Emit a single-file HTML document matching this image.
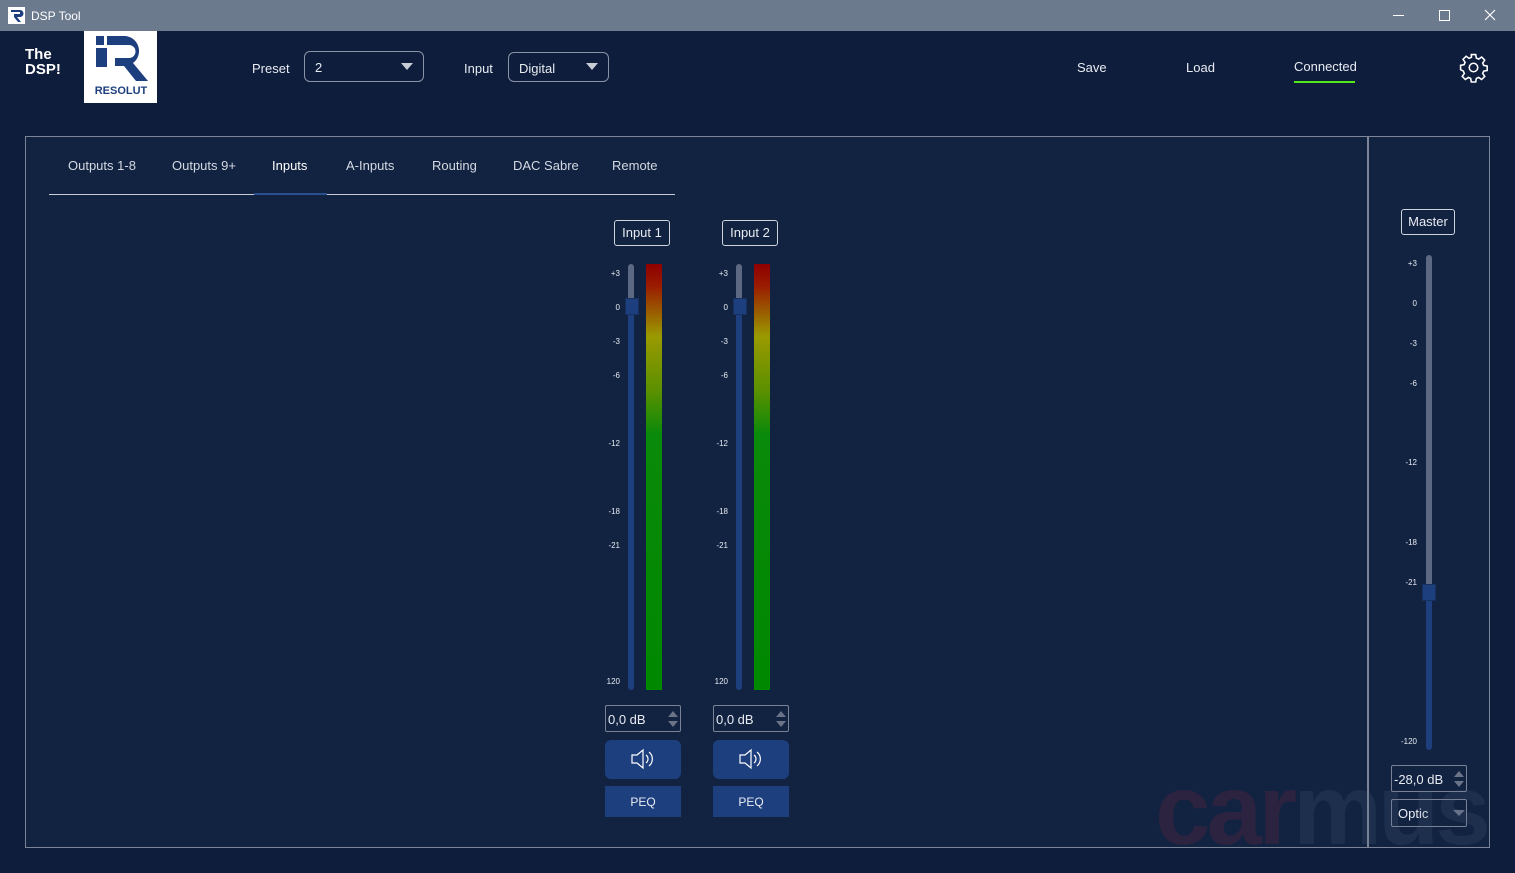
<!DOCTYPE html>
<html><head><meta charset="utf-8"><style>
*{margin:0;padding:0;box-sizing:border-box}
body{width:1515px;height:873px;background:#0e1d3b;font-family:"Liberation Sans",sans-serif;color:#e8ecf2;position:relative;overflow:hidden}
.a{position:absolute}
.tb{left:0;top:0;width:1515px;height:31px;background:#6c7a8e}
.lbl{font-size:13px;color:#e8ecf2}
.sel{border:1px solid #8a93a6;border-radius:6px;height:31px;font-size:13px;padding:8px 10px}
.tri{width:0;height:0;border-left:6px solid transparent;border-right:6px solid transparent;border-top:7px solid #c8ccd4}
.tab{font-size:13px;color:#d4d9e2;top:158px}
.sc{font-size:8px;color:#e8ecf2;text-align:right;width:20px}
.box{border:1px solid #d0d4dc;border-radius:3px;font-size:13px;text-align:center;padding-top:4px;height:26px}
.num{border:1px solid #7a8296;border-radius:2px;height:27px;font-size:13px;padding:6px 2px}
.btn{background:#1d3f7e;border-radius:6px}
.peq{background:#1d3f7e;font-size:12px;text-align:center;padding-top:9px;height:31px}
</style></head><body>
<div class="a tb"></div>
<svg class="a" style="left:8px;top:7px" width="17" height="17" viewBox="0 0 17 17"><rect width="17" height="17" fill="#fff"/><path d="M3 3h9a3 3 0 0 1 0 7h-3l4 5h-3l-4-5V7h6V5H3z" fill="#1d3f7e"/></svg>
<div class="a" style="left:31px;top:9px;font-size:12px;color:#fff">DSP Tool</div>
<div class="a" style="left:1393px;top:15px;width:11px;height:1px;background:#fff"></div>
<div class="a" style="left:1439px;top:10px;width:11px;height:11px;border:1px solid #fff"></div>
<svg class="a" style="left:1484px;top:9px" width="12" height="12"><path d="M1 1l10 10M11 1L1 11" stroke="#fff" stroke-width="1.2"/></svg>

<div class="a" style="left:25px;top:47px;font-size:15px;font-weight:bold;line-height:15px;color:#fff">The<br>DSP!</div>
<div class="a" style="left:84px;top:31px;width:73px;height:72px;background:#fff"></div>
<svg class="a" style="left:84px;top:31px" width="73" height="72" viewBox="0 0 73 72"><path d="M12 5h8v9h-8zM23 5h18a15 15 0 0 1 8 27l15 18h-12l-12-15h-9v-8h14a6 6 0 0 0 0-13H23zM12 17h11v19H12z" fill="#1d3f7e"/><text x="37" y="63" font-size="11" font-weight="bold" text-anchor="middle" fill="#1d3f7e" font-family="Liberation Sans">RESOLUT</text></svg>

<div class="a lbl" style="left:252px;top:61px">Preset</div>
<div class="a sel" style="left:304px;top:51px;width:120px">2</div>
<div class="a tri" style="left:401px;top:63px"></div>
<div class="a lbl" style="left:464px;top:61px">Input</div>
<div class="a sel" style="left:508px;top:52px;width:101px;height:30px">Digital</div>
<div class="a tri" style="left:586px;top:63px"></div>
<div class="a lbl" style="left:1077px;top:60px">Save</div>
<div class="a lbl" style="left:1186px;top:60px">Load</div>
<div class="a lbl" style="left:1294px;top:59px">Connected</div>
<div class="a" style="left:1294px;top:81px;width:61px;height:2px;background:#52e81a"></div>
<svg class="a" style="left:1458px;top:52px" width="31" height="31" viewBox="0 0 24 24" fill="none" stroke="#fff" stroke-width="1.2"><circle cx="12" cy="12" r="3.3"/><path d="M10.3 2h3.4l.5 2.7 1.8.8 2.3-1.6 2.4 2.4-1.6 2.3.8 1.8 2.7.5v3.4l-2.7.5-.8 1.8 1.6 2.3-2.4 2.4-2.3-1.6-1.8.8-.5 2.7h-3.4l-.5-2.7-1.8-.8-2.3 1.6-2.4-2.4 1.6-2.3-.8-1.8L2 13.7v-3.4l2.7-.5.8-1.8-1.6-2.3 2.4-2.4 2.3 1.6 1.8-.8z"/></svg>

<div class="a" style="left:25px;top:136px;width:1465px;height:712px;border:1px solid #7c8597;background:#122241"></div>
<div class="a" style="left:1367px;top:137px;width:2px;height:710px;background:#7c8597"></div>

<div class="a tab" style="left:68px">Outputs 1-8</div>
<div class="a tab" style="left:172px">Outputs 9+</div>
<div class="a tab" style="left:272px;color:#fff">Inputs</div>
<div class="a tab" style="left:346px">A-Inputs</div>
<div class="a tab" style="left:432px">Routing</div>
<div class="a tab" style="left:513px">DAC Sabre</div>
<div class="a tab" style="left:612px">Remote</div>
<div class="a" style="left:49px;top:194px;width:626px;height:1px;background:#c8ccd6"></div>
<div class="a" style="left:254px;top:193px;width:73px;height:2px;background:#2a4f8e"></div>

<div class="a box" style="left:614px;top:220px;width:56px">Input 1</div>
<div class="a" style="left:628px;top:264px;width:6px;height:40px;background:#5d6882;border-radius:3px"></div>
<div class="a" style="left:628px;top:304px;width:6px;height:386px;background:#1d3f7e;border-radius:3px"></div>
<div class="a" style="left:625px;top:298px;width:14px;height:17px;background:#1d3f7e;border:1px solid #16305f"></div>
<div class="a" style="left:646px;top:264px;width:16px;height:426px;background:linear-gradient(#8e0000 0%,#9a1a00 5%,#9a9a00 17%,#5a9000 30%,#0a8a0a 40%,#008800 100%)"></div>
<div class="a box" style="left:722px;top:220px;width:56px">Input 2</div>
<div class="a" style="left:736px;top:264px;width:6px;height:40px;background:#5d6882;border-radius:3px"></div>
<div class="a" style="left:736px;top:304px;width:6px;height:386px;background:#1d3f7e;border-radius:3px"></div>
<div class="a" style="left:733px;top:298px;width:14px;height:17px;background:#1d3f7e;border:1px solid #16305f"></div>
<div class="a" style="left:754px;top:264px;width:16px;height:426px;background:linear-gradient(#8e0000 0%,#9a1a00 5%,#9a9a00 17%,#5a9000 30%,#0a8a0a 40%,#008800 100%)"></div>

<div class="a sc" style="left:600px;top:269px">+3</div><div class="a sc" style="left:600px;top:303px">0</div><div class="a sc" style="left:600px;top:337px">-3</div><div class="a sc" style="left:600px;top:371px">-6</div><div class="a sc" style="left:600px;top:439px">-12</div><div class="a sc" style="left:600px;top:507px">-18</div><div class="a sc" style="left:600px;top:541px">-21</div><div class="a sc" style="left:600px;top:677px">120</div>
<div class="a sc" style="left:708px;top:269px">+3</div><div class="a sc" style="left:708px;top:303px">0</div><div class="a sc" style="left:708px;top:337px">-3</div><div class="a sc" style="left:708px;top:371px">-6</div><div class="a sc" style="left:708px;top:439px">-12</div><div class="a sc" style="left:708px;top:507px">-18</div><div class="a sc" style="left:708px;top:541px">-21</div><div class="a sc" style="left:708px;top:677px">120</div>

<div class="a num" style="left:605px;top:705px;width:76px">0,0 dB</div>
<div class="a num" style="left:713px;top:705px;width:76px">0,0 dB</div>
<svg class="a" style="left:666px;top:709px" width="14" height="20"><path d="M2 8l5-6 5 6zM2 12l5 6 5-6z" fill="#6a7388"/></svg>
<svg class="a" style="left:774px;top:709px" width="14" height="20"><path d="M2 8l5-6 5 6zM2 12l5 6 5-6z" fill="#6a7388"/></svg>
<div class="a btn" style="left:605px;top:740px;width:76px;height:39px"></div>
<div class="a btn" style="left:713px;top:740px;width:76px;height:39px"></div>
<svg class="a" style="left:630px;top:748px" width="26" height="22" viewBox="0 0 26 22" fill="none" stroke="#fff" stroke-width="1.2"><path d="M2 7h5l6-5v18l-6-5H2z"/><path d="M16 7a5 5 0 0 1 0 8M19 4a9 9 0 0 1 0 14"/></svg>
<svg class="a" style="left:738px;top:748px" width="26" height="22" viewBox="0 0 26 22" fill="none" stroke="#fff" stroke-width="1.2"><path d="M2 7h5l6-5v18l-6-5H2z"/><path d="M16 7a5 5 0 0 1 0 8M19 4a9 9 0 0 1 0 14"/></svg>
<div class="a peq" style="left:605px;top:786px;width:76px">PEQ</div>
<div class="a peq" style="left:713px;top:786px;width:76px">PEQ</div>

<div class="a box" style="left:1401px;top:209px;width:54px">Master</div>
<div class="a" style="left:1426px;top:255px;width:6px;height:335px;background:#5d6882;border-radius:3px"></div>
<div class="a" style="left:1426px;top:590px;width:6px;height:160px;background:#1d3f7e;border-radius:3px"></div>
<div class="a" style="left:1422px;top:584px;width:14px;height:17px;background:#1d3f7e;border:1px solid #16305f"></div>
<div class="a sc" style="left:1397px;top:259px">+3</div><div class="a sc" style="left:1397px;top:299px">0</div><div class="a sc" style="left:1397px;top:339px">-3</div><div class="a sc" style="left:1397px;top:379px">-6</div><div class="a sc" style="left:1397px;top:458px">-12</div><div class="a sc" style="left:1397px;top:538px">-18</div><div class="a sc" style="left:1397px;top:578px">-21</div><div class="a sc" style="left:1397px;top:737px">-120</div>
<div class="a num" style="left:1391px;top:765px;width:76px">-28,0 dB</div>
<svg class="a" style="left:1452px;top:769px" width="14" height="20"><path d="M2 8l5-6 5 6zM2 12l5 6 5-6z" fill="#6a7388"/></svg>
<div class="a num" style="left:1391px;top:799px;width:76px;height:28px;padding:6px">Optic</div>
<svg class="a" style="left:1452px;top:808px" width="14" height="10"><path d="M1 2h12l-6 6z" fill="#6a7388"/></svg>

<div class="a" style="left:1155px;top:760px;font-size:100px;font-weight:bold;letter-spacing:-4px;color:rgba(120,40,60,0.25);line-height:100px">car<span style="color:rgba(90,110,140,0.18)">mus</span></div>
</body></html>
